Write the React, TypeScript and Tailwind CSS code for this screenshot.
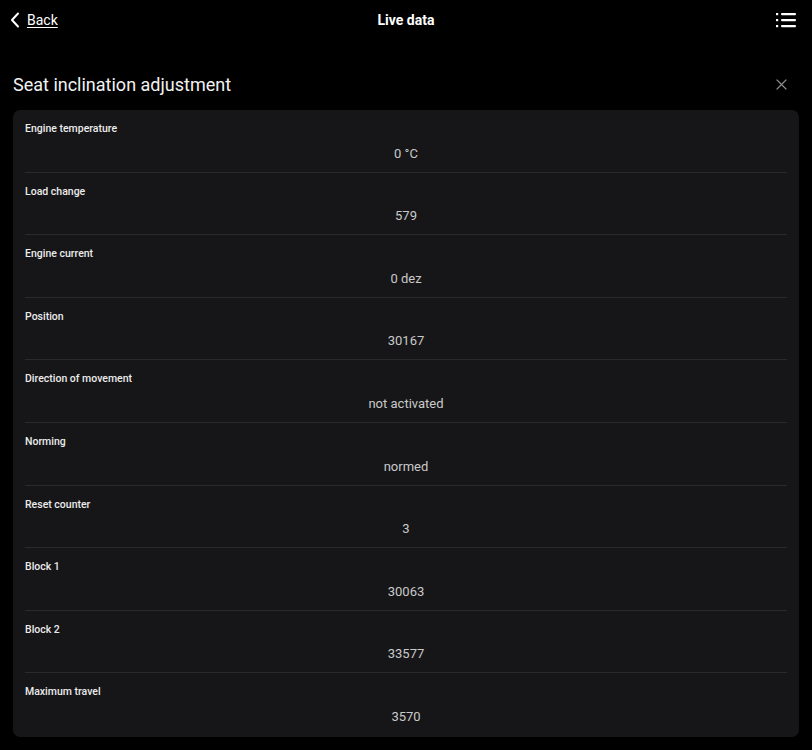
import React from "react";

const rows: [string, string][] = [
  ["Engine temperature", "0 °C"],
  ["Load change", "579"],
  ["Engine current", "0 dez"],
  ["Position", "30167"],
  ["Direction of movement", "not activated"],
  ["Norming", "normed"],
  ["Reset counter", "3"],
  ["Block 1", "30063"],
  ["Block 2", "33577"],
  ["Maximum travel", "3570"],
];

export default function App() {
  return (
    <div
      className="w-[812px] h-[750px] bg-black text-white overflow-hidden"
      style={{ fontFamily: "Roboto, 'Noto Sans', sans-serif" }}
    >
      <div className="relative h-10 flex items-center justify-between px-[10px]">
        <div className="flex items-center gap-[7px]">
          <svg width="10" height="16" viewBox="0 0 10 16" fill="none">
            <path d="M8 1.5L2 8l6 6.5" stroke="white" strokeWidth="2" strokeLinecap="round" strokeLinejoin="round" />
          </svg>
          <span className="text-[14px] underline underline-offset-2 text-white">Back</span>
        </div>
        <div className="absolute left-1/2 -translate-x-1/2 text-[14px] font-bold">Live data</div>
        <svg width="21" height="16" viewBox="0 0 21 16" fill="none" className="mr-[5px]">
          <rect x="0" y="1" width="2.2" height="2.2" fill="white" />
          <rect x="0" y="7" width="2.2" height="2.2" fill="white" />
          <rect x="0" y="13" width="2.2" height="2.2" fill="white" />
          <rect x="5" y="1" width="15" height="2.2" rx="1" fill="white" />
          <rect x="5" y="7" width="15" height="2.2" rx="1" fill="white" />
          <rect x="5" y="13" width="15" height="2.2" rx="1" fill="white" />
        </svg>
      </div>
      <div className="mt-[24px] h-10 flex items-center justify-between pl-[13px] pr-[25px]">
        <div className="text-[18px] text-[#f2f2f2]">Seat inclination adjustment</div>
        <svg width="11" height="11" viewBox="0 0 11 11" fill="none">
          <path d="M1 1l9 9M10 1l-9 9" stroke="#8a8a8a" strokeWidth="1.2" strokeLinecap="round" />
        </svg>
      </div>
      <div className="mt-[6px] mx-[13px] rounded-[7px] bg-[#161618] px-3 pb-[2px]">
        {rows.map(([label, value], i) => (
          <div
            key={label}
            className={`pt-[12px] pb-[9px] ${i < rows.length - 1 ? "border-b border-[#2a2a2d]" : ""}`}
          >
            <div className="text-[10.5px] leading-[14px] font-medium text-[#ececec]">{label}</div>
            <div className="mt-[8.6px] text-[13px] leading-[18px] text-center text-[#c9c9c9]">{value}</div>
          </div>
        ))}
      </div>
    </div>
  );
}
